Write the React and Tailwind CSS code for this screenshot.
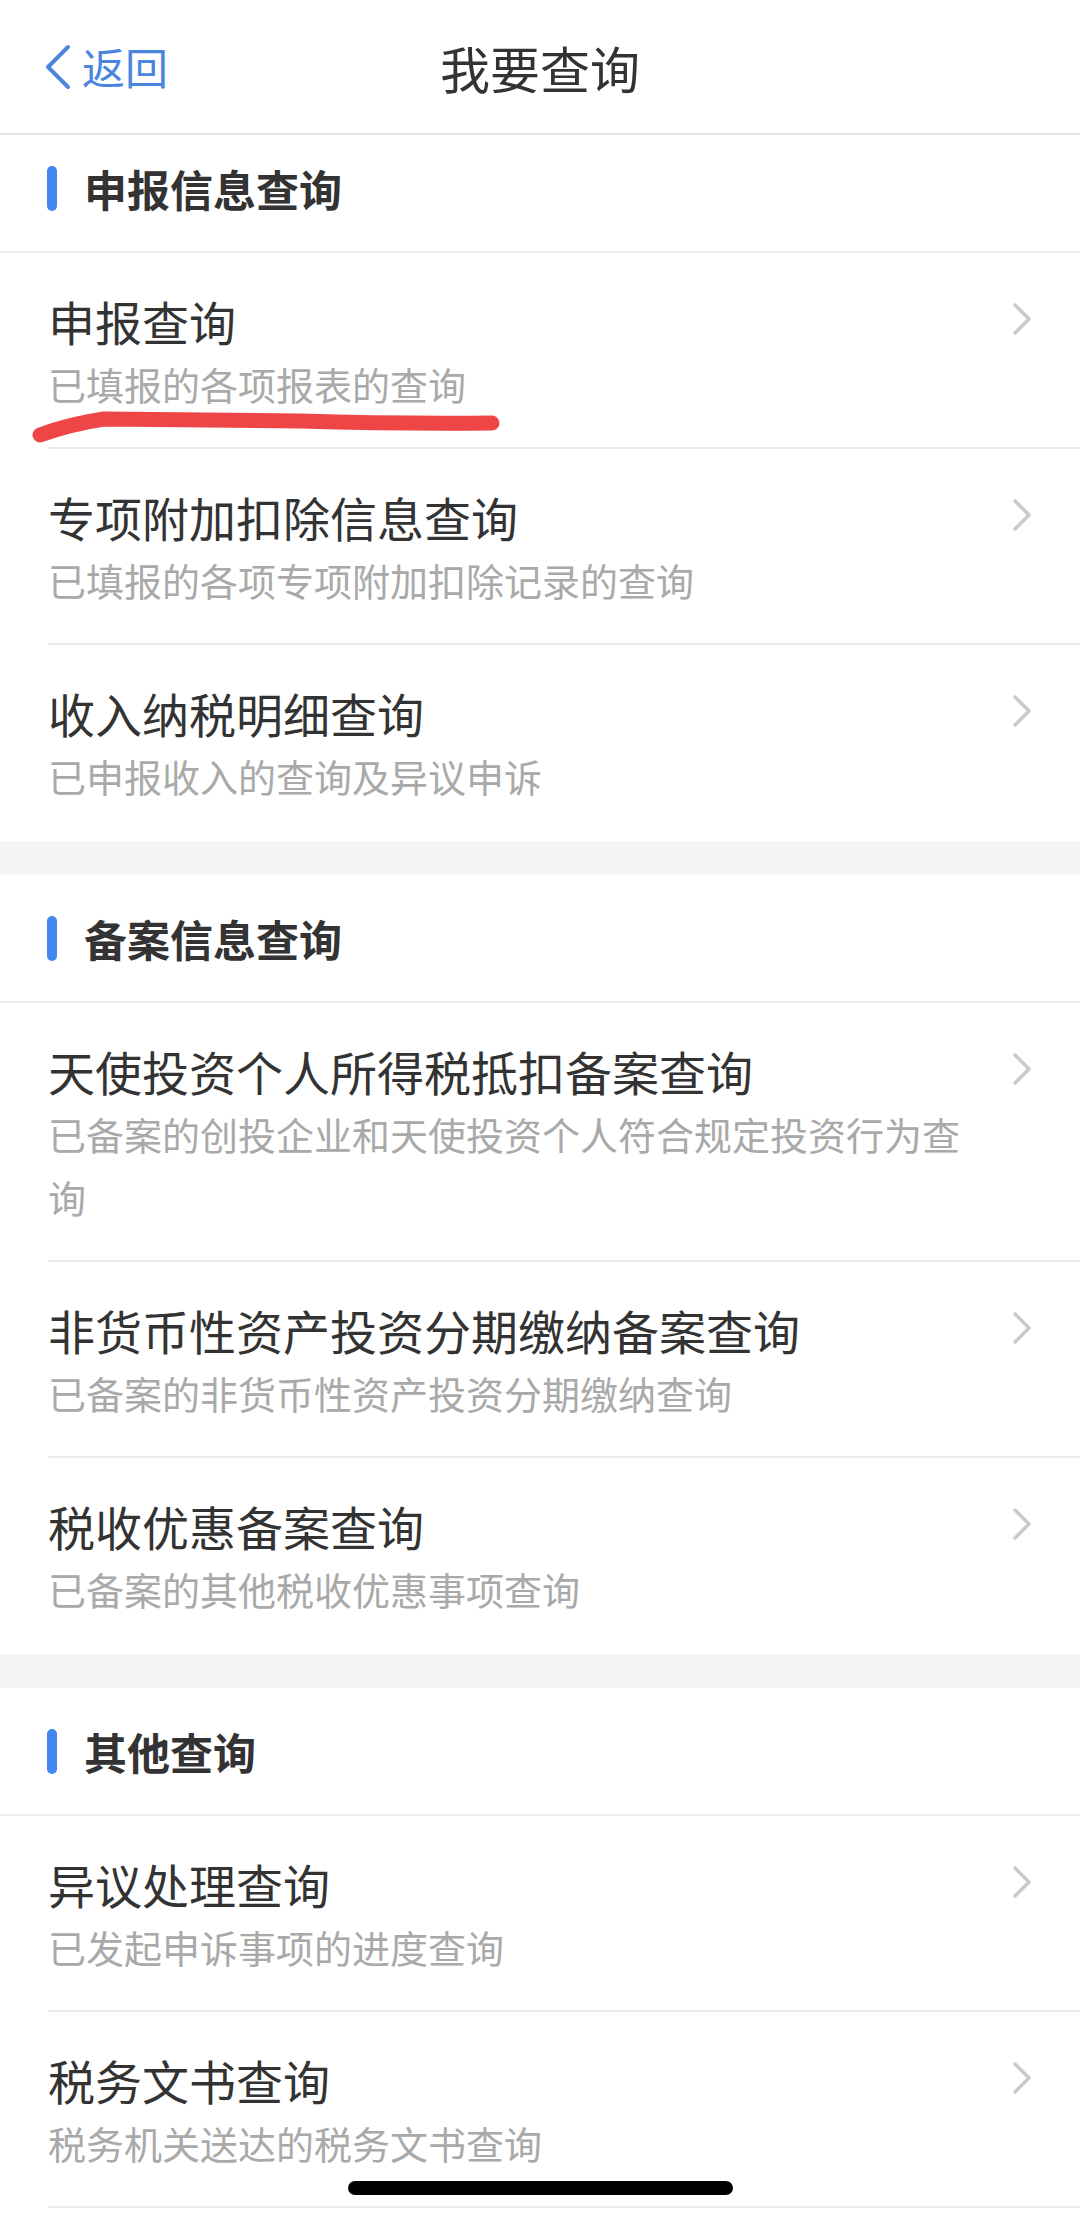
const SECTIONS = [
  {
    title: "申报信息查询",
    first: true,
    items: [
      { title: "申报查询", desc: "已填报的各项报表的查询", marked: true },
      { title: "专项附加扣除信息查询", desc: "已填报的各项专项附加扣除记录的查询" },
      { title: "收入纳税明细查询", desc: "已申报收入的查询及异议申诉" },
    ],
  },
  {
    title: "备案信息查询",
    items: [
      { title: "天使投资个人所得税抵扣备案查询", desc: "已备案的创投企业和天使投资个人符合规定投资行为查询" },
      { title: "非货币性资产投资分期缴纳备案查询", desc: "已备案的非货币性资产投资分期缴纳查询" },
      { title: "税收优惠备案查询", desc: "已备案的其他税收优惠事项查询" },
    ],
  },
  {
    title: "其他查询",
    items: [
      { title: "异议处理查询", desc: "已发起申诉事项的进度查询" },
      { title: "税务文书查询", desc: "税务机关送达的税务文书查询" },
    ],
  },
];

function Chevron() {
  return (
    <svg width="20" height="32" viewBox="0 0 20 32" className="shrink-0 mt-[10px]">
      <polyline points="3,2 17,16 3,30" fill="none" stroke="#c9c9ce" strokeWidth="3.5" strokeLinecap="round" strokeLinejoin="round" />
    </svg>
  );
}

function Item({ item, last }) {
  return (
    <div className="relative pl-[48px] bg-white">
      <div className={`flex gap-[34px] pr-[48px] pt-[40px] pb-[32px] border-b-2 ${last ? "border-transparent" : "border-[#ebebeb]"}`}>
        <div className="flex-1 min-w-0">
          <p className="text-[47px] leading-[56px] text-[#333333] m-0">{item.title}</p>
          <p className="text-[38px] leading-[63px] text-[#a9a9a9] mt-[3px]">{item.desc}</p>
        </div>
        <Chevron />
      </div>

      {/* hand-drawn red underline */}
      {item.marked && (
        <svg className="absolute left-0 top-0 pointer-events-none" width="520" height="200" viewBox="0 0 520 200">
          <path
            d="M40 182 Q 70 171 104 166 L 300 168 Q 400 171 492 170"
            fill="none"
            stroke="#ee4646"
            strokeWidth="15"
            strokeLinecap="round"
            strokeLinejoin="round"
          />
        </svg>
      )}
    </div>
  );
}

function SectionHeader({ title, first }) {
  return (
    <div className={`flex items-center gap-[27px] pl-[47px] bg-white border-b-2 border-[#eeeeee] ${first ? "h-[118px] pb-[10px]" : "h-[128px]"}`}>
      <div className="w-[10px] h-[45px] rounded-full bg-[#4286f0]" />
      <span className="text-[43px] font-bold text-[#333333] leading-none">{title}</span>
    </div>
  );
}

export default function App() {
  return (
    <div
      className="relative w-[1080px] h-[2213px] overflow-hidden bg-white"
      style={{ fontFamily: '"Noto Sans CJK SC", "Noto Sans", sans-serif' }}
    >
      {/* nav bar */}
      <div className="relative flex items-center justify-center h-[135px] border-b-2 border-[#e4e4e4]">
        <div className="absolute left-[44px] top-0 h-full flex items-center gap-[11px]">
          <svg width="27" height="46" viewBox="0 0 27 46">
            <polyline points="24,3 4,23 24,43" fill="none" stroke="#4a86de" strokeWidth="4" strokeLinecap="round" strokeLinejoin="round" />
          </svg>
          <span className="text-[43px] text-[#4a86de] leading-none">返回</span>
        </div>
        <span className="text-[50px] text-[#333333] leading-none">我要查询</span>
      </div>

      {SECTIONS.map((sec, si) => (
        <div key={sec.title}>
          {si > 0 && <div className="h-[34px] bg-[#f4f5f7]" />}
          <SectionHeader title={sec.title} first={sec.first} />
          {sec.items.map((it, i) => (
            <Item key={it.title} item={it} last={i === sec.items.length - 1 && si < SECTIONS.length - 1} />
          ))}
        </div>
      ))}

      {/* home indicator */}
      <div className="absolute left-[348px] top-[2181px] w-[385px] h-[14px] rounded-full bg-black" />
    </div>
  );
}
